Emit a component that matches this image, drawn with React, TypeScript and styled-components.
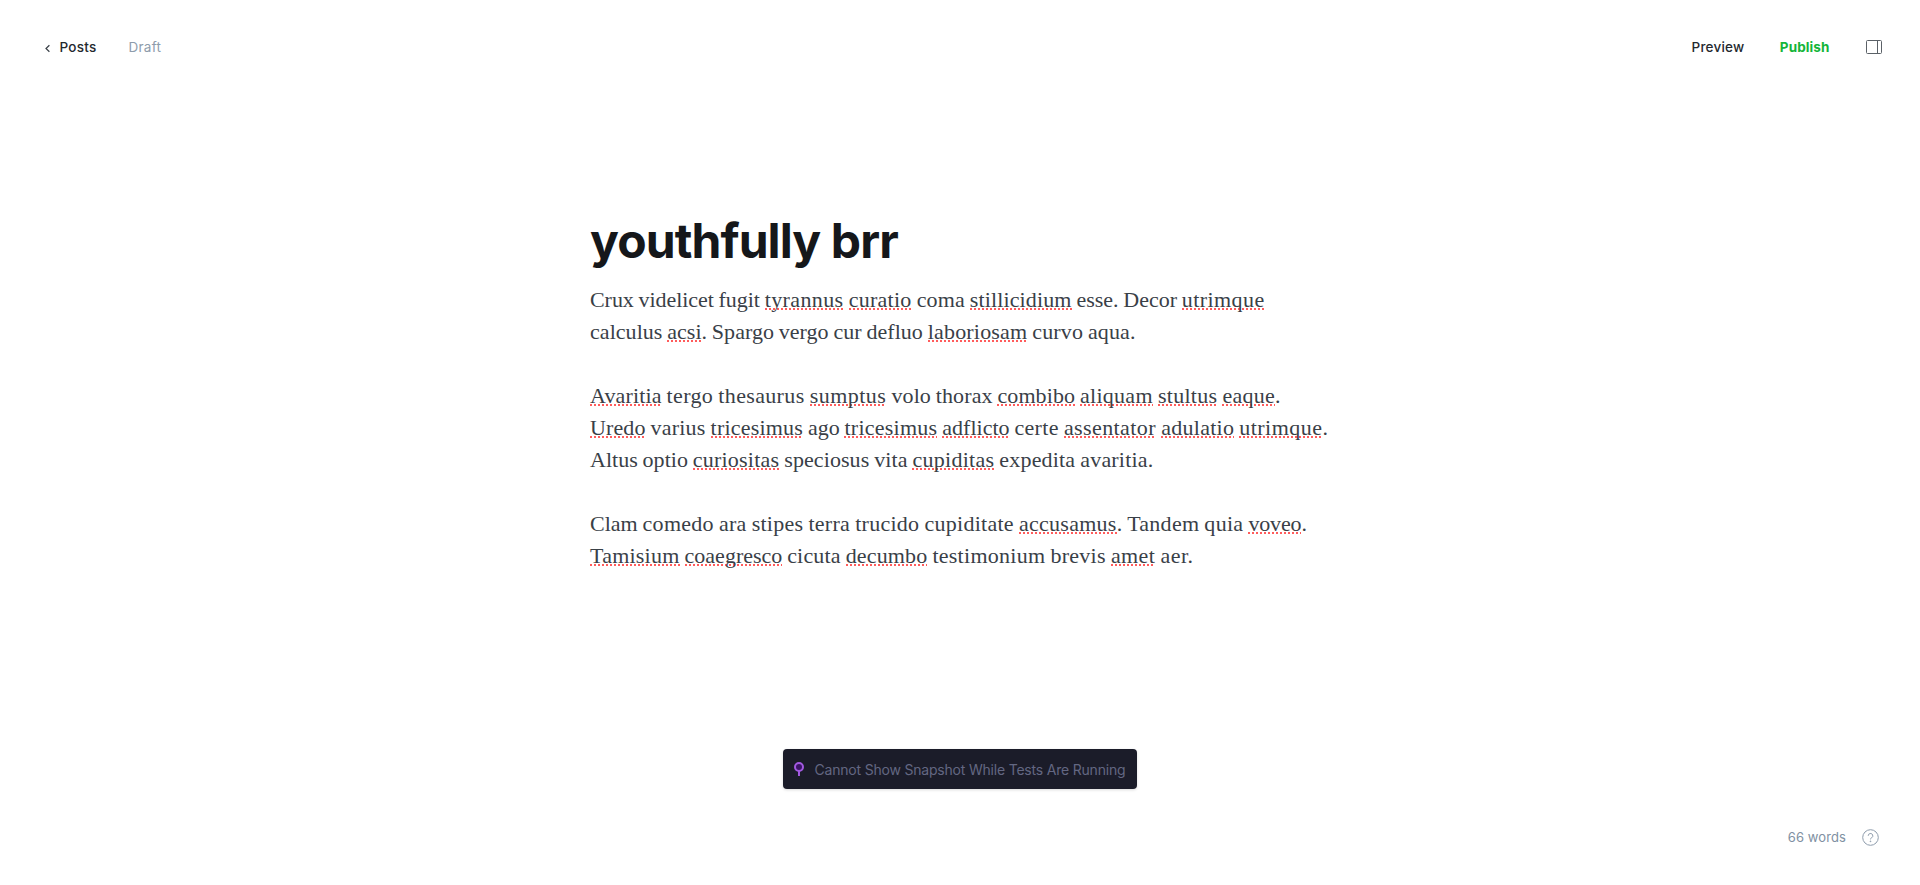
import React from "react";
import styled, { createGlobalStyle } from "styled-components";

const GlobalStyle = createGlobalStyle`
  *, *::before, *::after { box-sizing: border-box; }
  html, body { margin: 0; padding: 0; background: #fff; }
  body { font-family: Inter, "Liberation Sans", sans-serif; overflow: hidden; }
`;

const Page = styled.div`
  display: flex;
  flex-direction: column;
  height: 885px;
`;

const Header = styled.header`
  display: flex;
  align-items: center;
  justify-content: space-between;
  height: 94px;
  padding: 0 37px 0 44px;
`;

const Group = styled.div<{ $gap: number }>`
  display: flex;
  align-items: center;
  gap: ${(p) => p.$gap}px;
`;

const NavText = styled.span<{ $color: string; $weight: number; $spacing: number; $size?: number }>`
  font-size: ${(p) => p.$size ?? 13.5}px;
  line-height: 20px;
  font-weight: ${(p) => p.$weight};
  letter-spacing: ${(p) => p.$spacing}px;
  color: ${(p) => p.$color};
  white-space: nowrap;
`;

const WordCount = styled(NavText)`
  margin-bottom: 2px;
`;

const BackIcon = styled.svg`
  margin-top: 3px;
`;

const Article = styled.main`
  flex: 1;
  width: 740px;
  margin: 0 auto;
  padding-top: 119px;
`;

const Title = styled.h1`
  margin: 0;
  font-size: 48px;
  line-height: 56px;
  font-weight: 700;
  letter-spacing: -0.9px;
  color: #15171a;
`;

const Body = styled.div`
  display: flex;
  flex-direction: column;
  gap: 32px;
  margin-top: 15px;
  font-family: "Liberation Serif", serif;
  font-size: 22px;
  line-height: 32px;
  word-spacing: -0.7px;
  color: #394047;
`;

const Paragraph = styled.p`
  margin: 0;
`;

const Line = styled.span`
  display: block;
  height: 32px;
  white-space: pre;
`;

const Segment = styled.span<{ $spacing: number }>`
  letter-spacing: ${(p) => p.$spacing}px;
`;

const Misspelled = styled.span`
  background: repeating-linear-gradient(to right, #ff5c5c 0 2px, transparent 2px 4px) 0 21px / 100% 2px no-repeat;
`;

const ToastRow = styled.div`
  display: flex;
  justify-content: center;
  height: 40px;
`;

const Toast = styled.div`
  display: flex;
  align-items: center;
  width: 354px;
  height: 40px;
  padding-left: 11px;
  gap: 10.5px;
  border-radius: 4px;
  background: #1b1c29;
  color: #636782;
  font-size: 14px;
  letter-spacing: -0.2px;
  white-space: nowrap;
  box-shadow: 0 1px 3px rgba(0, 0, 0, 0.15);
`;

const Footer = styled.footer`
  display: flex;
  align-items: center;
  justify-content: flex-end;
  gap: 16px;
  height: 96px;
  padding: 1px 41px 0 0;
`;

type Run = [text: string, spacing: number];

/* Words between asterisks are flagged by the spell checker. */
const paragraphs: Run[][][] = [
  [
    [
      ["Crux videlicet fugit ", -0.05],
      ["*tyrannus* ", 0.39],
      ["*curatio* ", 0.25],
      ["coma *stillicidium* ", 0.13],
      ["esse. Decor ", -0.02],
      ["*utrimque*", 0.43],
    ],
    [
      ["calculus ", 0.05],
      ["*acsi*. ", 0],
      ["Spargo vergo cur defluo ", 0.03],
      ["*laboriosam* ", 0.19],
      ["curvo aqua.", 0.12],
    ],
  ],
  [
    [
      ["*Avaritia* ", 0.15],
      ["tergo thesaurus ", 0.35],
      ["*sumptus* ", 0.45],
      ["volo thorax *combibo* ", 0.09],
      ["*aliquam* *stultus* ", 0.28],
      ["*eaque*.", 0.245],
    ],
    [
      ["*Uredo* ", 0.12],
      ["varius *tricesimus* ", 0.21],
      ["ago ", -0.05],
      ["*tricesimus* ", 0.24],
      ["*adflicto* ", 0],
      ["certe ", 0.33],
      ["*assentator* ", 0.41],
      ["*adulatio* ", 0.27],
      ["*utrimque*.", 0.46],
    ],
    [
      ["Altus optio ", 0.02],
      ["*curiositas* ", 0.22],
      ["speciosus vita ", 0.08],
      ["*cupiditas* ", 0.27],
      ["expedita avaritia.", 0.18],
    ],
  ],
  [
    [
      ["Clam ", 0.02],
      ["comedo ara stipes terra trucido cupiditate ", 0.27],
      ["*accusamus*. Tandem quia ", 0.27],
      ["*voveo*.", -0.15],
    ],
    [
      ["*Tamisium* ", 0.23],
      ["*coaegresco* ", 0.01],
      ["cicuta *decumbo* ", 0.16],
      ["testimonium brevis ", 0.27],
      ["*amet* aer.", 0.42],
    ],
  ],
];

const renderRun = (text: string) =>
  text.split("*").map((part, i) => (i % 2 ? <Misspelled key={i}>{part}</Misspelled> : part));

export default function App() {
  return (
    <Page>
      <GlobalStyle />
      <Header>
        <Group $gap={32}>
          <Group $gap={8.5}>
            <BackIcon width="7" height="9" viewBox="0 0 7 9" fill="none" stroke="#394047" strokeWidth="1.2">
              <path d="M5.4 1.2 2 4.5l3.4 3.3" />
            </BackIcon>
            <NavText $color="#23282e" $weight={500} $spacing={0.25}>Posts</NavText>
          </Group>
          <NavText $color="#8e9cac" $weight={400} $spacing={0.25}>Draft</NavText>
        </Group>
        <Group $gap={35.5}>
          <NavText $color="#23282e" $weight={500} $spacing={0.2}>Preview</NavText>
          <NavText $color="#14b53a" $weight={700} $spacing={0.1}>Publish</NavText>
          <svg width="18" height="16" viewBox="0 0 18 16" fill="none" stroke="#5b6167">
            <rect x="1.5" y="1.5" width="15" height="13" rx="1" />
            <path d="M12.5 1.5v13" />
          </svg>
        </Group>
      </Header>
      <Article>
        <Title>youthfully brr</Title>
        <Body>
          {paragraphs.map((lines, i) => (
            <Paragraph key={i}>
              {lines.map((runs, j) => (
                <Line key={j}>
                  {runs.map(([text, spacing], k) => (
                    <Segment key={k} $spacing={spacing}>{renderRun(text)}</Segment>
                  ))}
                </Line>
              ))}
            </Paragraph>
          ))}
        </Body>
      </Article>
      <ToastRow>
        <Toast>
          <svg width="10" height="14" viewBox="0 0 10 14" fill="none" stroke="#a259e0" strokeWidth="2">
            <circle cx="5" cy="5" r="4" fill="#3b1466" />
            <path d="M5 9v5" />
          </svg>
          <span>Cannot Show Snapshot While Tests Are Running</span>
        </Toast>
      </ToastRow>
      <Footer>
        <WordCount $color="#8090a2" $weight={400} $spacing={0.1} $size={13}>66 words</WordCount>
        <svg width="17" height="17" viewBox="0 0 17 17" fill="none" stroke="#8e9cac">
          <circle cx="8.5" cy="8.5" r="7.8" />
          <path d="M6.2 6.8a2.3 2.3 0 1 1 3.4 2c-.8.4-1.1.7-1.1 1.6" />
          <circle cx="8.5" cy="12.3" r=".4" fill="#8e9cac" />
        </svg>
      </Footer>
    </Page>
  );
}
